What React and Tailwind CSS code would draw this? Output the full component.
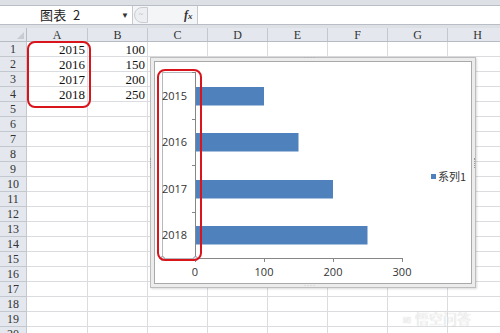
import React from 'react'

const COLS = [
  { id: 'A', w: 'w-[61px]' },
  { id: 'B', w: 'w-[60px]' },
  { id: 'C', w: 'w-[60px]' },
  { id: 'D', w: 'w-[60px]' },
  { id: 'E', w: 'w-[60px]' },
  { id: 'F', w: 'w-[60px]' },
  { id: 'G', w: 'w-[60px]' },
  { id: 'H', w: 'w-[60px]' },
]

const DATA = [
  ['2015', '100'],
  ['2016', '150'],
  ['2017', '200'],
  ['2018', '250'],
]

const SERIES = [
  { year: '2015', value: 100, y: 30 },
  { year: '2016', value: 150, y: 76 },
  { year: '2017', value: 200, y: 123 },
  { year: '2018', value: 250, y: 169 },
]

function FormulaBar() {
  return (
    <div className="bg-[#dde1e6]">
      <div className="h-[5px]" />
      <div className="h-[20px] flex items-stretch bg-white border-y border-[#b9bec6]">
        <div className="w-[133px] relative flex items-center border-r border-[#c5cad1]">
          <span className="ml-[40px] text-[13px] text-[#222] tracking-wide" style={{ fontFamily: '"Noto Sans CJK SC", sans-serif' }}>
            图表&nbsp;&nbsp;2
          </span>
          <span className="absolute left-[121px] top-[4px] text-[8px] text-[#333]">▼</span>
        </div>
        <div className="w-[65px] flex items-center bg-[#f4f5f7] border-r border-[#c5cad1]">
          <div className="ml-[1px] w-[14px] h-[16px] rounded-l-full border border-[#c9cdd3] bg-[#eceef1] flex items-center justify-center">
            <span className="text-[8px] text-[#b0b4ba] leading-none">~</span>
          </div>
          <span className="ml-[36px] text-[12px] italic font-bold text-[#333]" style={{ fontFamily: '"Liberation Serif", serif' }}>
            f<span className="text-[9px]">x</span>
          </span>
        </div>
        <div className="flex-1 bg-white" />
      </div>
      <div className="h-[3px]" />
    </div>
  )
}

function HeaderRow() {
  return (
    <div className="flex h-[14px] bg-[#e4e8ee] border-b border-[#b7bcc3]">
      <div className="w-[27px] shrink-0 border-r border-[#b7bcc3] relative">
        <span className="absolute right-[2px] bottom-[2px] w-0 h-0 border-l-[7px] border-l-transparent border-b-[7px] border-b-[#c8ccd2]" />
      </div>
      {COLS.map(c => (
        <div key={c.id} className={`${c.w} shrink-0 border-r border-[#c3c8cf] flex items-center justify-center text-[12px] text-[#333] leading-none`}>
          {c.id}
        </div>
      ))}
    </div>
  )
}

function Row({ n }) {
  const d = DATA[n - 1]
  return (
    <div className="flex h-[15px]">
      <div className="w-[27px] shrink-0 bg-[#e4e8ee] border-r border-b border-[#c3c8cf] flex items-center justify-center text-[12px] text-[#333] leading-none">
        {n}
      </div>
      {COLS.map((c, i) => (
        <div key={c.id} className={`${c.w} shrink-0 border-r border-b border-[#dadcdf] flex items-center justify-end pr-[2px] text-[13px] text-[#111] leading-none`}>
          {d && i < 2 ? d[i] : ''}
        </div>
      ))}
    </div>
  )
}

function Chart() {
  return (
    <div className="absolute left-[150px] top-[57px] w-[326px] h-[231px] border border-[#bdbdbd] bg-[#ececec] p-[3px] shadow-[1px_1px_2px_rgba(0,0,0,0.15)]">
      <div className="relative w-full h-full bg-white border border-[#a9a9a9]">
        <svg className="absolute left-[-5px] top-[-5px]" width="326" height="231" style={{ fontFamily: '"Open Sans", "Liberation Sans", sans-serif' }}>
          {/* category axis selection box */}
          <rect x="12.5" y="15.5" width="33" height="186" fill="none" stroke="#b4b8bd" strokeWidth="1" />
          {SERIES.map(s => (
            <g key={s.year}>
              <rect x="45" y={s.y} width={s.value * 0.69} height="18.5" fill="#4f81bd" />
              <text x="12" y={s.y + 13} fontSize="11" fill="#333">{s.year}</text>
            </g>
          ))}
          {/* vertical axis */}
          <line x1="45.5" y1="15" x2="45.5" y2="201" stroke="#868686" />
          {[15, 62, 108, 155].map(y => (
            <line key={y} x1="42" y1={y + 0.5} x2="45" y2={y + 0.5} stroke="#868686" />
          ))}
          {/* horizontal axis */}
          <line x1="45" y1="201.5" x2="253" y2="201.5" stroke="#868686" />
          {[45, 114, 183, 252].map(x => (
            <line key={x} x1={x + 0.5} y1="201" x2={x + 0.5} y2="205" stroke="#868686" />
          ))}
          {[['0', 45], ['100', 114], ['200', 183], ['300', 252]].map(([t, x]) => (
            <text key={t} x={x} y="219" fontSize="11" fill="#333" textAnchor="middle">{t}</text>
          ))}
          <circle cx="12.5" cy="201.5" r="2" fill="#dfe3ea" stroke="#8a94a3" strokeWidth="0.8" />
          <circle cx="45.5" cy="201.5" r="2" fill="#dfe3ea" stroke="#8a94a3" strokeWidth="0.8" />
        </svg>
        <div className="absolute left-[276px] top-[106px] flex items-center gap-[2px] text-[11px] text-[#333]" style={{ fontFamily: '"Noto Sans CJK SC", sans-serif' }}>
          <span className="w-[5px] h-[5px] bg-[#4f81bd]" />
          <span>系列1</span>
        </div>
      </div>
      <span className="absolute left-[153px] top-[-3px] text-[6px] leading-none text-[#9a9a9a] tracking-[1px]">····</span>
      <span className="absolute right-[-1px] top-[100px] w-[2px] h-[10px] border-l border-dotted border-[#9a9a9a]" />
      <span className="absolute left-[-1px] top-[100px] w-[2px] h-[10px] border-l border-dotted border-[#9a9a9a]" />
      <span className="absolute left-[153px] bottom-[-2px] text-[6px] leading-none text-[#9a9a9a] tracking-[1px]">····</span>
    </div>
  )
}

export default function App() {
  return (
    <div className="relative w-[500px] h-[333px] overflow-hidden bg-white" style={{ fontFamily: '"Liberation Serif", "Noto Sans CJK SC", serif' }}>
      <FormulaBar />
      <HeaderRow />
      {Array.from({ length: 20 }, (_, i) => (
        <Row key={i} n={i + 1} />
      ))}

      <Chart />

      {/* red annotations */}
      <div className="absolute left-[27px] top-[41px] w-[64px] h-[67px] border-2 border-[#d9141b] rounded-[8px]" />
      <div className="absolute left-[157px] top-[69px] w-[45px] h-[192px] border-2 border-[#d9141b] rounded-[8px]" />

      {/* watermark */}
      <div className="absolute left-[402px] top-[308px] flex items-center gap-[3px] text-[14px] text-[#f4f4f4] [text-shadow:0_0_1px_rgba(0,0,0,0.2)]" style={{ fontFamily: '"Noto Sans CJK SC", sans-serif' }}>
        <span className="text-[12px]">≋</span>
        <span>悟空问答</span>
      </div>
    </div>
  )
}
